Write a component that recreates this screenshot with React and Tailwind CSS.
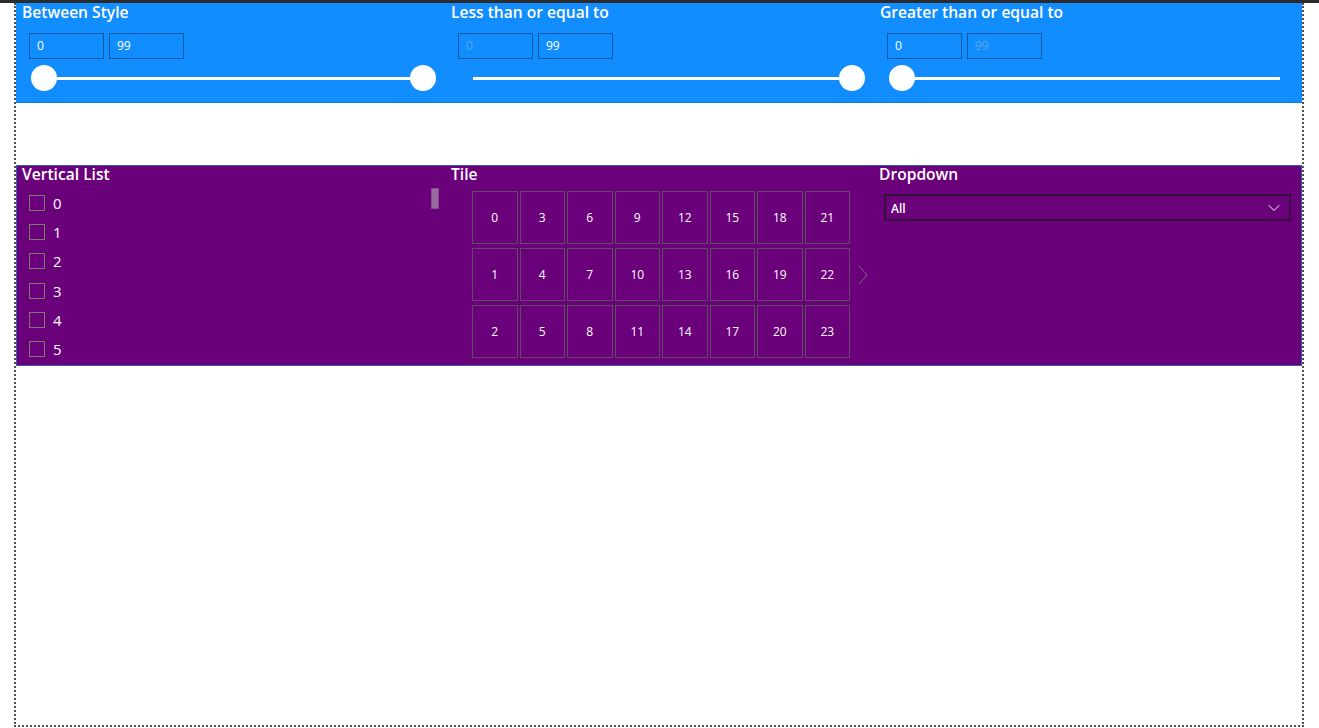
import { ChevronDown } from "lucide-react";

const font = { fontFamily: "'Open Sans', 'Noto Sans', sans-serif" };

function RangeSlicer({ title, from, to, dimFrom, dimTo, lo, hi }) {
  return (
    <div className="flex flex-col">
      <div className="px-[6px] h-[20px] text-[15.6px] leading-[19px] font-semibold text-white">{title}</div>
      <div className="flex gap-[5px] ml-[13px] mt-[10px]">
        <div
          className={`w-[75px] h-[26px] border border-[#0b5aa3] pl-[7px] text-[12px] leading-[24px] ${
            dimFrom ? "text-[#5aaaf2]" : "text-white"
          }`}
        >
          {from}
        </div>
        <div
          className={`w-[75px] h-[26px] border border-[#0b5aa3] pl-[7px] text-[12px] leading-[24px] ${
            dimTo ? "text-[#5aaaf2]" : "text-white"
          }`}
        >
          {to}
        </div>
      </div>
      {/* slider */}
      <div className="relative ml-[15px] mr-[9px] mt-[6px] h-[26px]">
        <div className="absolute left-[13px] right-[13px] top-[11.5px] h-[3px] bg-white" />
        {lo && <div className="absolute left-0 top-0 w-[26px] h-[26px] rounded-full bg-white" />}
        {hi && <div className="absolute right-0 top-0 w-[26px] h-[26px] rounded-full bg-white" />}
      </div>
    </div>
  );
}

const tiles = [0, 3, 6, 9, 12, 15, 18, 21, 1, 4, 7, 10, 13, 16, 19, 22, 2, 5, 8, 11, 14, 17, 20, 23];

export default function App() {
  return (
    <div className="w-[1319px] h-[728px] bg-white overflow-hidden" style={font}>
      <div className="h-[3px] bg-[#2b2b2b]" />
      <div className="ml-[14px] w-[1290px] h-[724px] border-2 border-t-0 border-dotted border-[#505050]">
        {/* range slicers */}
        <div className="h-[100px] bg-[#118dff] border-b border-[#0f7fe6] grid grid-cols-[429px_429px_1fr]">
          <RangeSlicer title="Between Style" from="0" to="99" lo hi />
          <RangeSlicer title="Less than or equal to" from="0" to="99" dimFrom hi />
          <RangeSlicer title="Greater than or equal to" from="0" to="99" dimTo lo />
        </div>

        {/* list / tile / dropdown slicers */}
        <div className="mt-[62px] h-[201px] bg-[#6b007b] border border-[#3f58b4] grid grid-cols-[428px_429px_1fr]">
          <div className="relative flex flex-col">
            <div className="px-[5px] h-[20px] text-[15.6px] leading-[16px] font-semibold text-white">Vertical List</div>
            <div className="mt-[2.5px] flex flex-col">
              {[0, 1, 2, 3, 4, 5].map((n) => (
                <div key={n} className="h-[29.2px] flex items-center pl-[12px] gap-[8px]">
                  <div className="w-[16px] h-[16px] border border-[#7b7a6c]" />
                  <span className="text-[15px] text-white leading-none pt-[1px]">{n}</span>
                </div>
              ))}
            </div>
            <div className="absolute left-[414px] top-[22px] w-[8px] h-[21px] bg-[#9a68a3] border border-[#86508f]" />
          </div>

          <div className="flex flex-col">
            <div className="px-[6px] h-[20px] text-[15.6px] leading-[16px] font-semibold text-white">Tile</div>
            <div className="flex items-center mt-[5px] ml-[27px]">
              <div className="grid grid-cols-[repeat(8,45.5px)] gap-x-[2px] gap-y-[4px]">
                {tiles.map((t) => (
                  <div
                    key={t}
                    className="h-[53px] border border-[#5e4c61] flex items-center justify-center text-[12px] text-white"
                  >
                    {t}
                  </div>
                ))}
              </div>
              <svg className="ml-[8px]" width="10" height="20" viewBox="0 0 10 20" fill="none">
                <polyline points="1,1 9,10 1,19" stroke="#7e6a82" strokeWidth="1" />
              </svg>
            </div>
          </div>

          <div className="flex flex-col">
            <div className="px-[5px] h-[20px] text-[15.6px] leading-[16px] font-semibold text-white">Dropdown</div>
            <div className="mt-[8px] ml-[10px] mr-[10px] h-[27px] border-2 border-[#35103c] flex items-center justify-between pl-[5px] pr-[5px]">
              <span className="text-[12px] font-semibold text-white pt-[3px]">All</span>
              <ChevronDown className="w-[20px] h-[20px] text-white" strokeWidth={1.2} />
            </div>
          </div>
        </div>
      </div>
    </div>
  );
}
